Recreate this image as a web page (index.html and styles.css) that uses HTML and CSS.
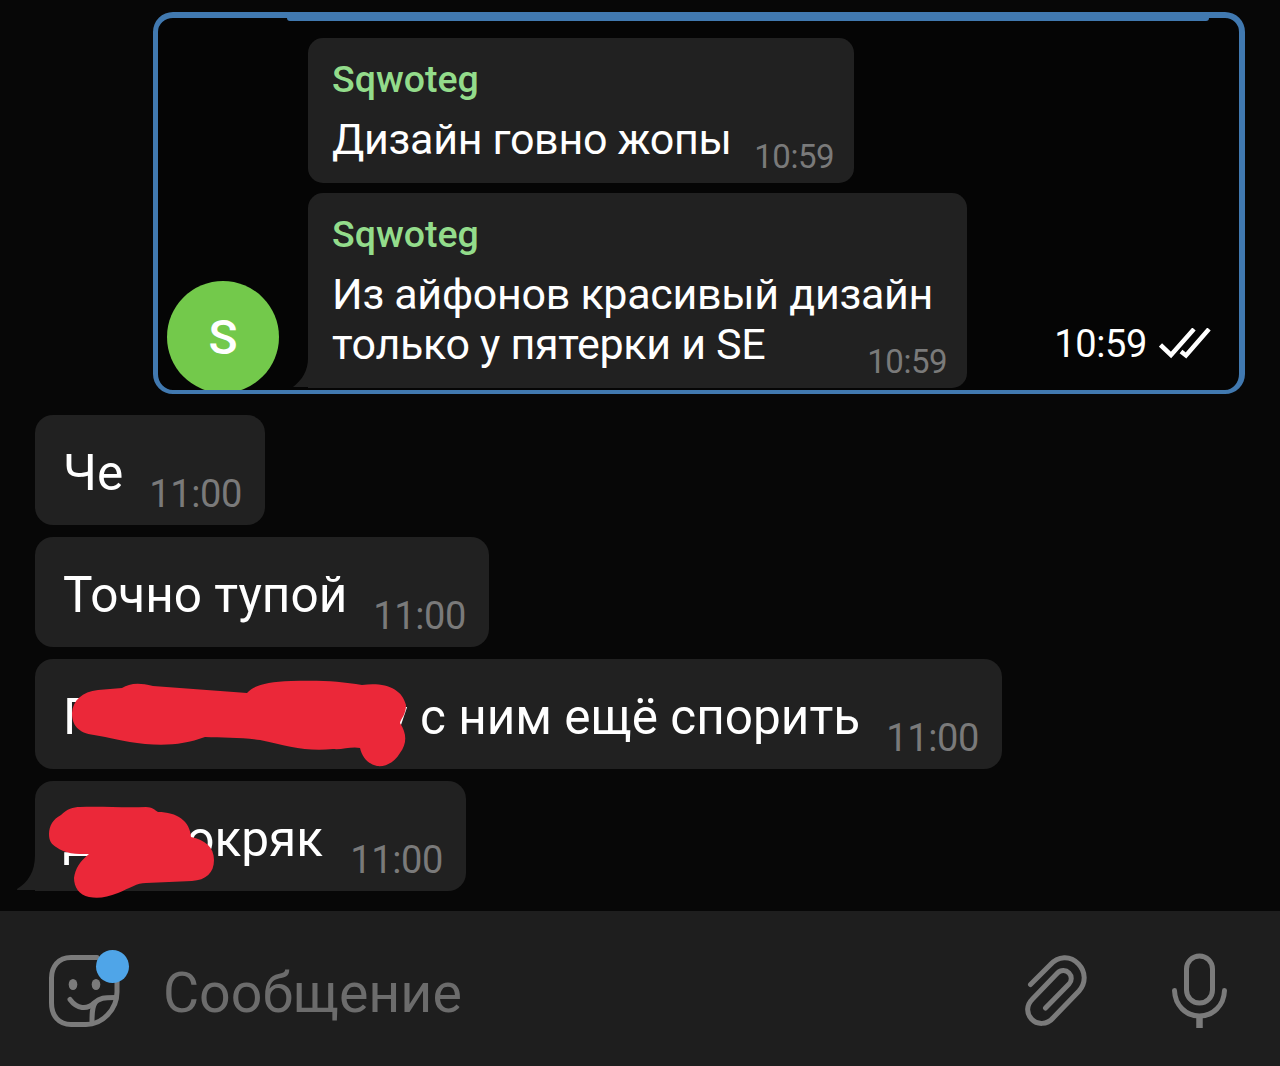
FILE: index.html
```html
<!DOCTYPE html>
<html lang="ru">
<head>
    <meta charset="UTF-8">
    <title>Чат</title>
    <link rel="stylesheet" href="styles.css">
</head>
<body>
    <div class="chat">
        <div class="photo">
            <div class="avatar">S</div>
            <div class="photo-messages">
                <div class="small-bubble first">
                    <div class="name">Sqwoteg</div>
                    <div class="small-text">Дизайн говно жопы</div>
                    <div class="small-time">10:59</div>
                </div>
                <div class="small-bubble second">
                    <div class="name">Sqwoteg</div>
                    <div class="small-text">Из айфонов красивый дизайн<br>только у пятерки и SE</div>
                    <div class="small-time">10:59</div>
                    <svg class="small-tail" width="17" height="30" viewBox="0 0 17 30"><path d="M15 0C15 13 9 22 0 29H17V0Z" fill="#212121"/></svg>
                </div>
            </div>
            <div class="status">
                <span class="status-time">10:59</span>
                <svg width="52" height="32" viewBox="0 0 52 32" fill="none" stroke="#fff" stroke-width="4.500">
                    <path d="M1.500 17L12 27L35 1"/>
                    <path d="M22 23.500L27 27.500L50 1"/>
                </svg>
            </div>
        </div>

        <div class="messages">
            <div class="bubble w1">
                <span class="text">Че</span>
                <span class="time">11:00</span>
            </div>
            <div class="bubble w2">
                <span class="text">Точно тупой</span>
                <span class="time">11:00</span>
            </div>
            <div class="bubble w3">
                <span class="text">П<span class="gap-long"></span>у с ним ещё спорить</span>
                <span class="time">11:00</span>
                <svg class="scribble-long" width="338" height="88" viewBox="0 0 338 88">
                    <path fill="#eb2839" d="M1 33C2 20 11 12 27 10L51 8C58 4 66 2 82 6L176 13C183 5 196 2 220 1C247 0 270 1 291 5C315 2 331 9 335 25C335 35 330 38 329 43C336 54 336 63 329 73C323 83 314 87 306 86C297 84 291 77 289 68C281 66 271 70 262 69C236 72 216 66 189 60C171 57 151 58 134 57C115 64 97 66 74 64C52 62 38 57 23 55C7 53 1 45 1 33Z"/>
                </svg>
            </div>
            <div class="bubble w4">
                <svg class="tail" width="20" height="36" viewBox="0 0 20 36"><path d="M18 0C18 17 11 27 0 34C0 35 0 35 2 35H20V0Z" fill="#212121"/></svg>
                <span class="text">Д<span class="gap-short"></span>окряк</span>
                <span class="time">11:00</span>
                <svg class="scribble-short" width="168" height="94" viewBox="0 0 168 94">
                    <path fill="#eb2839" d="M1 28C1 20 5 13 13 9C19 3 25 1 32 1C53 0 75 2 98 1C104 1 107 4 110 6C129 6 142 15 143 31C157 34 166 41 166 54C166 67 158 74 144 75L98 77C89 77 82 82 70 87C59 91 51 93 41 91C31 89 26 81 26 72C27 63 32 55 41 48C28 48 17 48 8 41C3 38 1 34 1 28Z"/>
                </svg>
            </div>
        </div>
    </div>

    <div class="input-bar">
        <div class="sticker">
            <svg width="74" height="74" viewBox="0 0 74 74" fill="none" stroke="#7b7b7b" stroke-width="5" stroke-linecap="round" stroke-linejoin="round">
                <path d="M50 3.500H24C11 3.500 4.500 13 4.500 24V49C4.500 62 12 70.500 24 70.500H39C55 70.500 70 56 70 38V24"/>
                <path d="M23 45.500C30 55 40 56 47 49C53 43.500 57 43.500 68 43.500"/>
                <path d="M48 49C45 53 45 60 45 68"/>
                <ellipse cx="26" cy="30.500" rx="4.300" ry="5.500" fill="#7b7b7b" stroke="none"/>
                <ellipse cx="49" cy="30.500" rx="4.300" ry="5.500" fill="#7b7b7b" stroke="none"/>
            </svg>
            <span class="badge"></span>
        </div>
        <div class="placeholder">Сообщение</div>
        <svg class="clip" width="64" height="74" viewBox="0 0 64 74" fill="none" stroke="#7b7b7b" stroke-width="5" stroke-linecap="round">
            <path d="M6.500 30.500L26 11C34 2 46 1 54.500 10C62 18 62 29 55 37L29 64C23 71 13 71 7.500 65C2 59 2.500 51 8.500 45L33.500 19C37 15.500 42 16 45 19C48 22 48 27 45 30L21.500 54"/>
        </svg>
        <svg class="mic" width="58" height="80" viewBox="0 0 58 80" fill="none" stroke="#7b7b7b" stroke-width="5" stroke-linecap="round">
            <rect x="15.500" y="5" width="26" height="47" rx="13"/>
            <path d="M3.500 39.500C4 54.500 15 65 28.500 65S53 54.500 53.500 39.500"/>
            <path d="M28.500 65V77" stroke-width="6.500" stroke-linecap="butt"/>
        </svg>
    </div>
</body>
</html>
```
FILE: styles.css
```css
body {
    margin: 0;
    width: 1280px;
    height: 1066px;
    overflow: hidden;
    background-color: #070707;
    font-family: Roboto, sans-serif;
    color: #fff;
}

.chat {
    height: 911px;
    padding-top: 12px;
    box-sizing: border-box;
}

/* forwarded picture */
.photo {
    position: relative;
    display: flex;
    align-items: flex-end;
    width: 1092px;
    height: 382px;
    margin-left: 153px;
    box-sizing: border-box;
    border: 5px solid #4179b0;
    border-top-width: 6px;
    border-right-width: 6px;
    border-bottom-width: 4px;
    border-radius: 20px;
    background-color: #050505;
    overflow: hidden;
}

.photo::before {
    content: "";
    position: absolute;
    top: 0;
    left: 129px;
    width: 922px;
    height: 3px;
    border-radius: 0 0 8px 8px;
    background-color: #4179b0;
}

.avatar {
    width: 112px;
    height: 112px;
    margin: 0 29px -3px 9px;
    border-radius: 50%;
    background-color: #73c94b;
    font-size: 48px;
    font-weight: 500;
    line-height: 113px;
    text-align: center;
}

.photo-messages {
    display: flex;
    flex-direction: column;
    gap: 10px;
    width: 659px;
    margin-bottom: 2px;
}

.small-bubble {
    position: relative;
    display: grid;
    grid-template-rows: 57px 1fr;
    padding: 19px 20px 6px 24px;
    box-sizing: border-box;
    border-radius: 15px;
    background-color: #212121;
}

.first {
    width: 546px;
    height: 145px;
}

.second {
    height: 195px;
    border-bottom-left-radius: 0;
}

.name {
    font-size: 37.5px;
    font-weight: 500;
    line-height: 44px;
    color: #93dc8b;
}

.small-text {
    grid-area: 2 / 1;
    font-size: 43px;
    line-height: 50px;
    letter-spacing: -0.3px;
    white-space: nowrap;
}

.small-time {
    grid-area: 2 / 1;
    align-self: end;
    justify-self: end;
    font-size: 33px;
    line-height: 40px;
    letter-spacing: -0.5px;
    color: #7a7a7a;
}

.small-tail {
    position: absolute;
    left: -15px;
    bottom: 0;
}

.status {
    display: flex;
    align-items: center;
    gap: 12px;
    margin: 0 28px 22px auto;
}

.status-time {
    font-size: 38px;
    line-height: 48px;
    letter-spacing: -0.4px;
}

/* incoming messages */
.messages {
    display: flex;
    flex-direction: column;
    gap: 12px;
    padding: 21px 0 0 35px;
}

.bubble {
    position: relative;
    display: flex;
    justify-content: space-between;
    height: 110px;
    padding: 28px 23px 9px 28px;
    box-sizing: border-box;
    border-radius: 18px;
    background-color: #212121;
}

.w1 { width: 230px; }
.w2 { width: 454px; }
.w3 { width: 967px; }

.w4 {
    width: 431px;
    border-bottom-left-radius: 0;
}

.text {
    font-size: 49.5px;
    line-height: 61px;
    white-space: nowrap;
}

.time {
    align-self: flex-end;
    font-size: 38px;
    line-height: 44px;
    letter-spacing: -0.4px;
    color: #7a7a7a;
}

.gap-long {
    display: inline-block;
    width: 286px;
}

.gap-short {
    display: inline-block;
    width: 86px;
}

.tail {
    position: absolute;
    left: -18px;
    bottom: 0;
}

.scribble-long {
    position: absolute;
    left: 36px;
    top: 21px;
}

.scribble-short {
    position: absolute;
    left: 13px;
    top: 25px;
}

/* bottom bar */
.input-bar {
    display: flex;
    align-items: center;
    height: 155px;
    padding: 0 51px 0 47px;
    box-sizing: border-box;
    background-color: #1e1e1e;
}

.sticker {
    position: relative;
    height: 74px;
    margin-top: 4px;
}

.badge {
    position: absolute;
    top: -4px;
    left: 49px;
    width: 33px;
    height: 33px;
    border-radius: 50%;
    background-color: #4fa5e8;
}

.placeholder {
    flex: 1;
    margin-left: 42px;
    margin-top: 10px;
    font-size: 55.5px;
    line-height: 64px;
    color: #6c6c6c;
}

.clip {
    margin: 4px 83px 0 0;
}

.mic {
    margin-top: 5px;
}
```
